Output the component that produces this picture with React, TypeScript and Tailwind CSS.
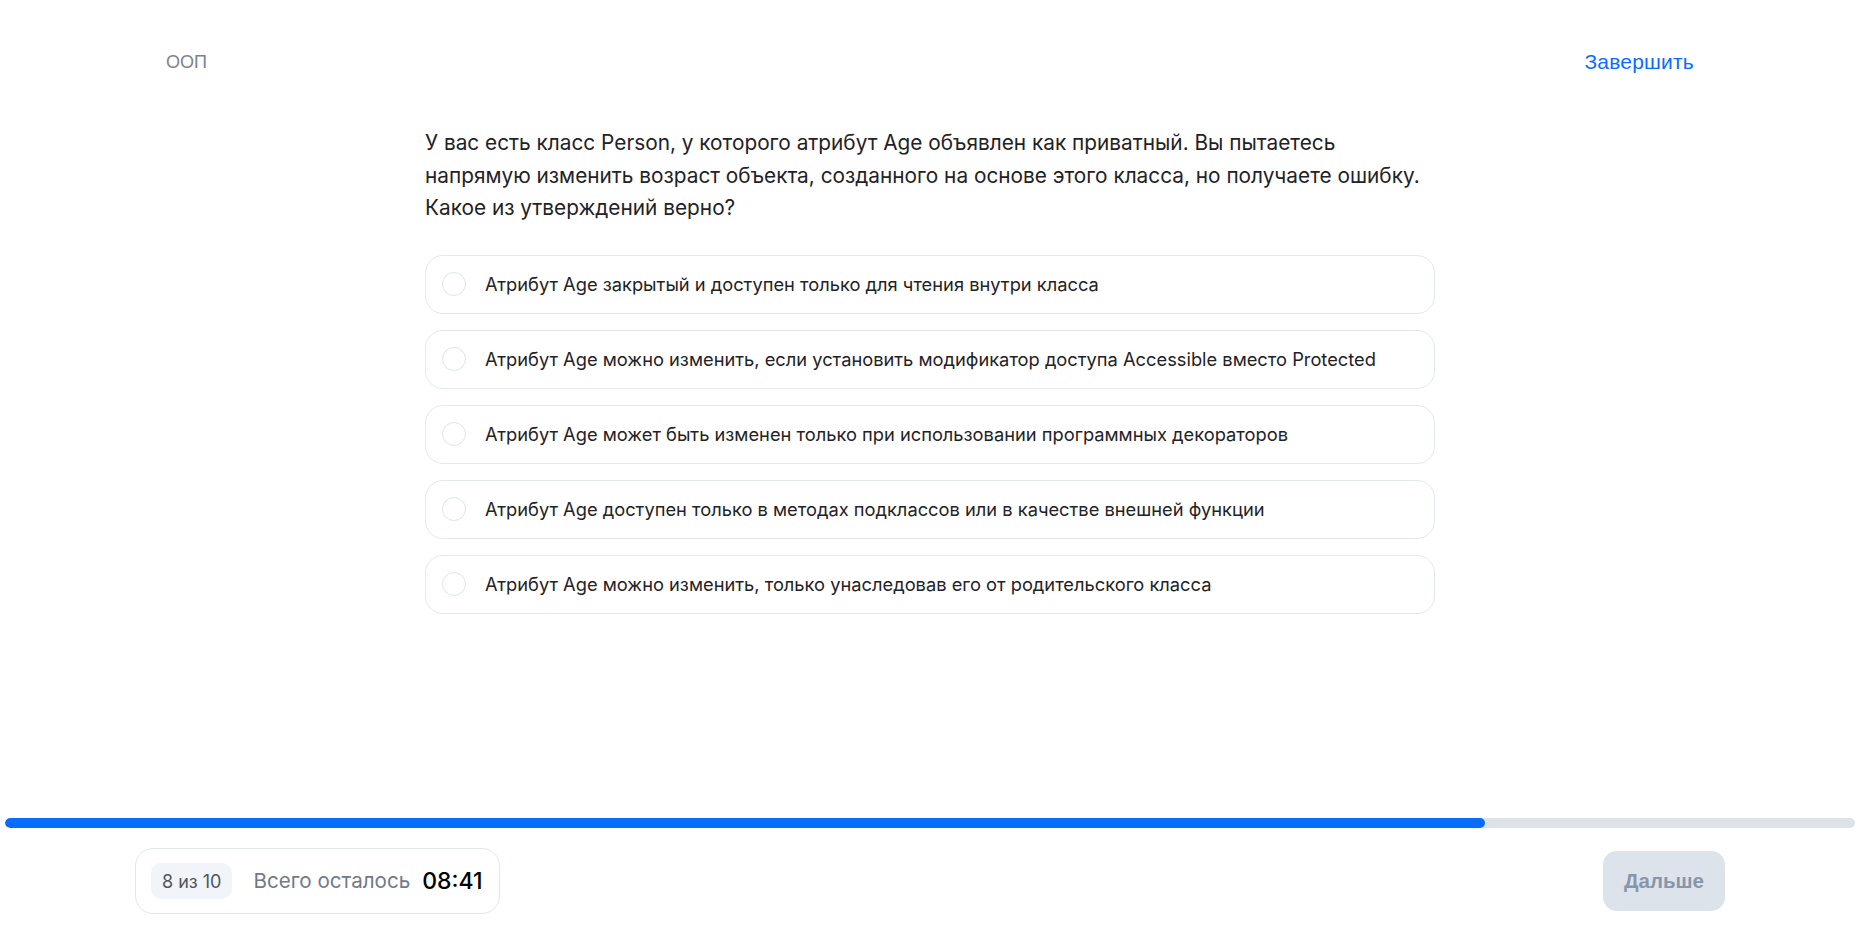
import { useState } from 'react';

const options = [
  'Атрибут Age закрытый и доступен только для чтения внутри класса',
  'Атрибут Age можно изменить, если установить модификатор доступа Accessible вместо Protected',
  'Атрибут Age может быть изменен только при использовании программных декораторов',
  'Атрибут Age доступен только в методах подклассов или в качестве внешней функции',
  'Атрибут Age можно изменить, только унаследовав его от родительского класса',
];

export default function App() {
  const [selected, setSelected] = useState<number | null>(null);

  return (
    <div className="min-h-screen flex flex-col bg-white" style={{ fontFamily: 'Inter, "Noto Sans", sans-serif' }}>
      <div className="w-[1590px] mx-auto px-[31px] pt-[51px] flex items-center justify-between">
        <span className="text-[18px] leading-[22px] text-[#7b8491]" style={{ fontFamily: '"Liberation Sans", Arial, sans-serif' }}>
          ООП
        </span>
        <button
          className="text-[21px] leading-[22px] tracking-[0.2px] text-[#0a6cff]"
          style={{ fontFamily: '"Liberation Sans", Arial, sans-serif' }}
        >
          Завершить
        </button>
      </div>

      <div className="w-[1010px] mx-auto mt-[54px]">
        <p className="text-[20.8px] leading-[32.6px] text-[#1f2226] mb-[30px] whitespace-nowrap">
          У вас есть класс Person, у которого атрибут Age объявлен как приватный. Вы пытаетесь
          <br />
          напрямую изменить возраст объекта, созданного на основе этого класса, но получаете ошибку.
          <br />
          Какое из утверждений верно?
        </p>

        <div className="flex flex-col gap-[16px]">
          {options.map((opt, i) => (
            <button
              key={i}
              onClick={() => setSelected(i)}
              className="w-full flex items-center gap-[19px] pl-4 pr-4 py-[15px] border border-[#e3e8ef] rounded-[18px] text-left bg-white"
            >
              <span
                className={
                  selected === i
                    ? 'w-6 h-6 rounded-full border-[7px] border-[#0a6cff] shrink-0'
                    : 'w-6 h-6 rounded-full border-[1.5px] border-[#dfe4eb] shrink-0'
                }
              ></span>
              <span className="text-[18.3px] leading-[27px] text-[#1f2226]">{opt}</span>
            </button>
          ))}
        </div>
      </div>

      <div className="mt-auto">
        <div className="mx-[5px] h-[10px] rounded-full bg-[#dee3ea] overflow-hidden">
          <div className="h-full rounded-full bg-[#0a6cff]" style={{ width: '80%' }}></div>
        </div>
        <div className="w-[1590px] mx-auto mt-[20px] mb-[21px] flex items-center justify-between">
          <div className="h-[66px] flex items-center pl-[15px] pr-4 border border-[#e3e8ef] rounded-[18px]">
            <span className="h-9 px-[11px] flex items-center rounded-[10px] bg-[#f1f4f8] text-[18px] text-[#4f5660]">
              8 из 10
            </span>
            <span className="ml-[21px] text-[20.6px] text-[#707a88]">Всего осталось</span>
            <span className="ml-3 text-[23px] font-medium text-black">08:41</span>
          </div>
          <button
            className="h-[60px] px-[21px] rounded-[14px] bg-[#dde3eb] text-[20.5px] font-bold text-[#8796ab]"
            style={{ fontFamily: '"Liberation Sans", Arial, sans-serif' }}
          >
            Дальше
          </button>
        </div>
      </div>
    </div>
  );
}
